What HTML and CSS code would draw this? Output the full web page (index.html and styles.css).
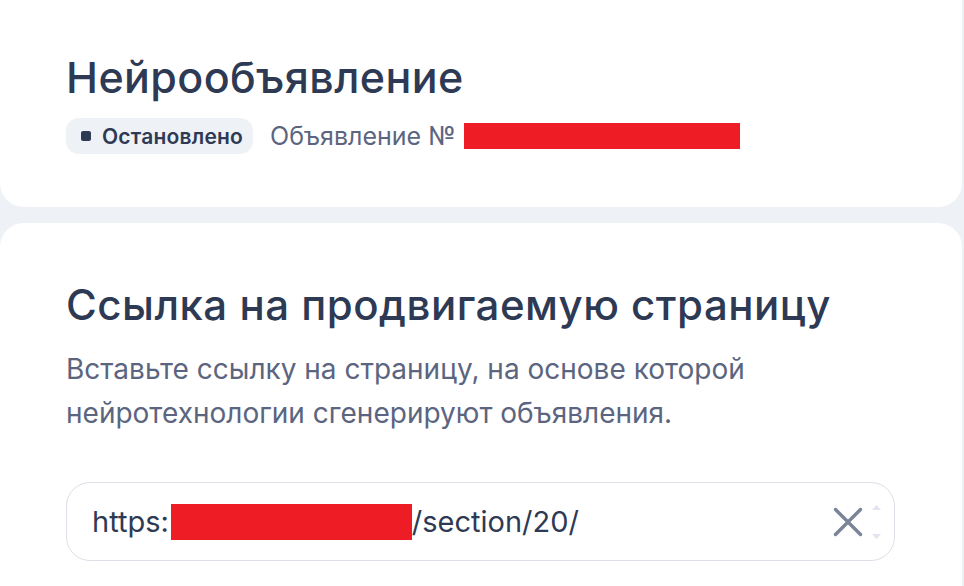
FILE: index.html
```html
<!DOCTYPE html>
<html lang="ru">
<head>
<meta charset="utf-8">
<link rel="stylesheet" href="styles.css">
</head>
<body>
<div class="page">
  <section class="card card-head">
    <h1 class="title">Нейрообъявление</h1>
    <div class="meta">
      <span class="chip"><span class="chip-dot"></span>Остановлено</span>
      <span class="ad-num">Объявление №</span>
      <span class="redact redact-num"></span>
    </div>
  </section>
  <section class="card card-link">
    <h2 class="subtitle">Ссылка на продвигаемую страницу</h2>
    <p class="desc">Вставьте ссылку на страницу, на основе которой нейротехнологии сгенерируют объявления.</p>
    <div class="field">
      <span class="field-text">https:<span class="redact redact-url"></span>/section/20/</span>
      <svg class="clear" width="30" height="30" viewBox="0 0 30 30"><path d="M2.5 2.5L27.5 27.5M27.5 2.5L2.5 27.5" stroke="#7a8498" stroke-width="3.4" stroke-linecap="round"/></svg>
      <span class="spin"><svg width="9" height="5" viewBox="0 0 9 5"><path d="M4.5 0L9 5H0Z" fill="#e2e4ee"/></svg><svg width="9" height="5" viewBox="0 0 9 5"><path d="M0 0H9L4.5 5Z" fill="#e2e4ee"/></svg></span>
    </div>
  </section>
</div>
</body>
</html>
```

FILE: styles.css
```css
* { box-sizing: border-box; }
html, body { margin: 0; padding: 0; }
body {
  background: #eef2f7;
  font-family: Inter, "Noto Sans", "DejaVu Sans", sans-serif;
  width: 964px;
  height: 586px;
  overflow: hidden;
}
.page {
  display: flex;
  flex-direction: column;
  gap: 16px;
  width: 962px;
  height: 616px;
  margin-top: -30px;
}
.card {
  background: #fff;
  border-radius: 24px;
}
.card-head {
  padding: 81px 66px 53px;
}
.title {
  margin: 0;
  font-size: 43px;
  font-weight: 500;
  letter-spacing: 0.4px;
  color: #2e3a54;
  line-height: 52px;
}
.meta {
  display: flex;
  align-items: center;
  margin-top: 15px;
  height: 36px;
}
.chip {
  display: flex;
  align-items: center;
  height: 36px;
  padding: 0 10px 0 15px;
  background: #eef1f6;
  border-radius: 13px;
  font-size: 21px;
  font-weight: 600;
  letter-spacing: 0.2px;
  color: #2e3a54;
}
.chip-dot {
  width: 10px;
  height: 10px;
  border-radius: 2px;
  background: #2e3a54;
  margin-right: 11px;
}
.ad-num {
  margin-left: 17px;
  font-size: 25px;
  color: #5b6580;
}
.redact { display: inline-block; background: #ee1c25; }
.redact-num { width: 276px; height: 26px; margin-left: 8px; }
.card-link {
  flex: 1;
  padding: 57px 66px 0;
  border-bottom-left-radius: 0;
  border-bottom-right-radius: 0;
}
.subtitle {
  margin: 0;
  font-size: 42px;
  font-weight: 500;
  letter-spacing: 0.5px;
  color: #2e3a54;
  line-height: 50px;
}
.desc {
  margin: 17px 0 0;
  width: 720px;
  font-size: 28px;
  line-height: 44px;
  color: #5b6580;
}
.field {
  margin-top: 47px;
  width: 829px;
  height: 79px;
  border: 1px solid #dcdfe8;
  border-radius: 24px;
  display: flex;
  align-items: center;
  padding: 0 13px 0 25px;
}
.field-text {
  flex: 1;
  font-size: 29px;
  color: #2e3a54;
  display: flex;
  align-items: center;
}
.redact-url { width: 241px; height: 36px; margin-left: 2px; }
.clear { margin-right: 9px; }
.spin {
  display: flex;
  flex-direction: column;
  justify-content: space-between;
  height: 34px;
}
```
